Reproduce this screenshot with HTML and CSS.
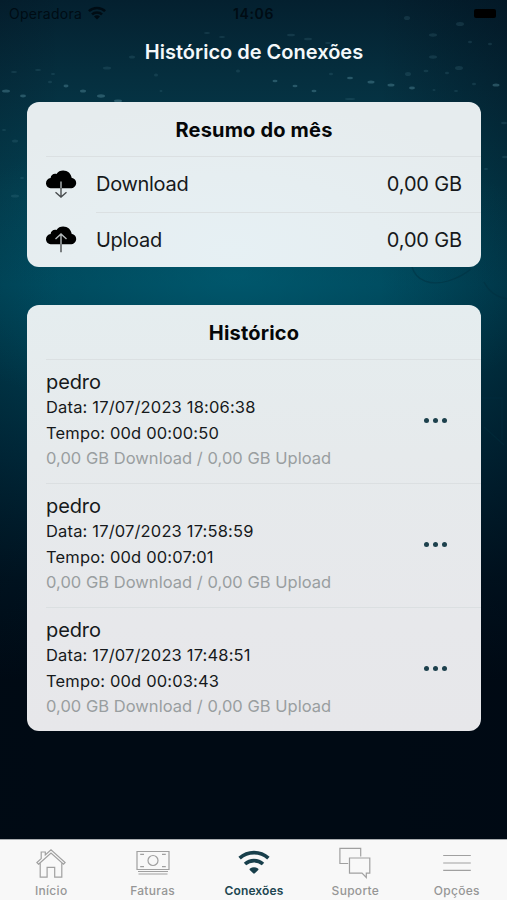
FILE: index.html
```html
<!DOCTYPE html>
<html lang="pt-BR">
<head>
<meta charset="utf-8">
<title>Histórico de Conexões</title>
<link rel="stylesheet" href="styles.css">
</head>
<body>
<div class="app">
  <svg class="sky" viewBox="0 0 507 840" aria-hidden="true">
    <g fill="#5d95a5">
      <g opacity=".4">
        <ellipse cx="6" cy="91" rx="4" ry="1.6"/><ellipse cx="23" cy="96" rx="3" ry="1.4"/><ellipse cx="66" cy="86" rx="2.5" ry="1.4"/><ellipse cx="83" cy="91" rx="3" ry="1.5"/><ellipse cx="101" cy="96" rx="4" ry="1.7"/><ellipse cx="118" cy="101" rx="4" ry="1.4"/>
        <ellipse cx="275" cy="81" rx="2.5" ry="1.3"/><ellipse cx="295" cy="86" rx="2.5" ry="1.3"/><ellipse cx="314" cy="91" rx="2.5" ry="1.3"/><ellipse cx="350" cy="78" rx="3" ry="1.3"/><ellipse cx="371" cy="82" rx="3.5" ry="1.5"/><ellipse cx="391" cy="85" rx="3.5" ry="1.5"/><ellipse cx="412" cy="88" rx="3" ry="1.4"/><ellipse cx="496" cy="85" rx="3.5" ry="1.6"/>
      </g>
      <g opacity=".17">
        <ellipse cx="107" cy="68" rx="4" ry="1.5"/><ellipse cx="132" cy="57" rx="3" ry="1.5"/><ellipse cx="50" cy="82" rx="2" ry="1.2"/><ellipse cx="53" cy="74" rx="2" ry="1"/><ellipse cx="38" cy="70" rx="3" ry="1"/><ellipse cx="14" cy="72" rx="3" ry="1"/><ellipse cx="156" cy="75" rx="2" ry="1.5"/><ellipse cx="161" cy="91" rx="1.5" ry="1"/><ellipse cx="238" cy="71" rx="2" ry="1.5"/><ellipse cx="207" cy="33" rx="3" ry="1"/><ellipse cx="222" cy="37" rx="3" ry="1"/>
        <ellipse cx="291" cy="35" rx="4" ry="1.3"/><ellipse cx="308" cy="39" rx="4" ry="1.3"/><ellipse cx="328" cy="43" rx="3" ry="1"/><ellipse cx="331" cy="74" rx="2" ry="1.3"/><ellipse cx="407" cy="18" rx="3" ry="2"/><ellipse cx="433" cy="35" rx="4" ry="1.7"/><ellipse cx="460" cy="24" rx="4" ry="2"/><ellipse cx="433" cy="57" rx="4" ry="1.7"/><ellipse cx="459" cy="68" rx="4" ry="2"/><ellipse cx="408" cy="74" rx="3" ry="2"/><ellipse cx="426" cy="71" rx="2.5" ry="1.3"/><ellipse cx="490" cy="44" rx="2" ry="1.3"/><ellipse cx="470" cy="42" rx="2" ry="1.3"/><ellipse cx="474" cy="84" rx="2" ry="1.3"/><ellipse cx="447" cy="73" rx="2" ry="1.3"/><ellipse cx="434" cy="90" rx="1.5" ry="1"/><ellipse cx="456" cy="91" rx="2" ry="1"/><ellipse cx="350" cy="99" rx="5" ry="1"/>
        <ellipse cx="15" cy="141" rx="3" ry="1.5"/><ellipse cx="4" cy="130" rx="2" ry="1"/><ellipse cx="22" cy="178" rx="2" ry="1"/><ellipse cx="15" cy="196" rx="4" ry="1.5"/><ellipse cx="504" cy="123" rx="3" ry="1.3"/><ellipse cx="505" cy="157" rx="3" ry="1.3"/><ellipse cx="486" cy="169" rx="2" ry="1"/>
      </g>
    </g>
    <g fill="none" stroke="#022e3e" stroke-width="1.3" opacity=".45">
      <path d="M412 267c4 14 19 19 36 14 10-3 17-7 23-12M484 282c5 10 12 15 23 17M482 398h20v42M484 427l20 18"/>
    </g>
  </svg>

  <header class="status">
    <div class="carrier">
      <span>Operadora</span>
      <svg width="18" height="14" viewBox="0 0 18 14"><g fill="none" stroke="currentColor" stroke-width="2.5"><path d="M.9 5.2a11.6 11.6 0 0 1 16.2 0M4 8.4a7.2 7.2 0 0 1 10 0"/></g><path d="M6 10.4a4.2 4.2 0 0 1 6 0l-3 3z" fill="currentColor"/></svg>
    </div>
    <span class="clock">14:06</span>
    <span class="battery"></span>
  </header>
  <h1 class="title">Histórico de Conexões</h1>

  <main>
    <section class="card summary">
      <h2>Resumo do mês</h2>
      <div class="usage">
        <svg class="cloud" width="32" height="32" viewBox="0 0 32 32"><path class="cloud-fill" d="M7 22.3C3.4 22.3 1 20.2 1 17.2c0-2.7 2-4.8 4.6-5.1C5.8 9 8.7 7 11.5 8c1.5-2.5 3.8-3.6 6.6-3.6 4.7 0 8.1 3.1 8.5 7.4 2.7.5 4.6 2.6 4.6 5.2 0 3-2.4 5.3-6 5.3z"/><path class="shaft" d="M16 15.5v6.8"/><path class="arrow" d="M16 22v9M10.5 26.2l5.5 4.9 5.5-4.9"/></svg>
        <div class="usage-line"><span class="name">Download</span><span class="value">0,00 GB</span></div>
      </div>
      <div class="usage">
        <svg class="cloud" width="32" height="32" viewBox="0 0 32 32"><path class="cloud-fill" d="M7 22.3C3.4 22.3 1 20.2 1 17.2c0-2.7 2-4.8 4.6-5.1C5.8 9 8.7 7 11.5 8c1.5-2.5 3.8-3.6 6.6-3.6 4.7 0 8.1 3.1 8.5 7.4 2.7.5 4.6 2.6 4.6 5.2 0 3-2.4 5.3-6 5.3z"/><path class="shaft" d="M16 12v10.3M10.5 16.9l5.5-4.9 5.5 4.9"/><path class="arrow" d="M16 22.3v8"/></svg>
        <div class="usage-line"><span class="name">Upload</span><span class="value">0,00 GB</span></div>
      </div>
    </section>

    <section class="card history">
      <h2>Histórico</h2>
      <article class="session">
        <div class="details"><h3>pedro</h3><p>Data: 17/07/2023 18:06:38</p><p>Tempo: 00d 00:00:50</p><p class="traffic">0,00 GB Download / 0,00 GB Upload</p></div>
        <div class="more"><i></i><i></i><i></i></div>
      </article>
      <article class="session">
        <div class="details"><h3>pedro</h3><p>Data: 17/07/2023 17:58:59</p><p>Tempo: 00d 00:07:01</p><p class="traffic">0,00 GB Download / 0,00 GB Upload</p></div>
        <div class="more"><i></i><i></i><i></i></div>
      </article>
      <article class="session">
        <div class="details"><h3>pedro</h3><p>Data: 17/07/2023 17:48:51</p><p>Tempo: 00d 00:03:43</p><p class="traffic">0,00 GB Download / 0,00 GB Upload</p></div>
        <div class="more"><i></i><i></i><i></i></div>
      </article>
    </section>
  </main>

  <nav class="tabs">
    <div class="tab"><svg width="34" height="34" viewBox="0 0 34 34"><path d="M4.5 18.2 17 7l12.5 11.2 1.6-1.7L17 3.8l-5.7 5.1V6H7.2v6.6l-4.3 3.9zM6.2 17.2v13.9h6.9v-9.8h7.6v9.8h7.1V17.2"/></svg><span>Início</span></div>
    <div class="tab"><svg width="34" height="34" viewBox="0 0 34 34"><path d="M1 5.5h32v18H1zM4.2 8.3H8M26 8.3h3.8M4.2 20.7H8M26 20.7h3.8M2 25.5h30M2.5 28h29"/><circle cx="17" cy="14.5" r="5"/></svg><span>Faturas</span></div>
    <div class="tab active"><svg width="34" height="34" viewBox="0 0 34 34"><path class="wave" d="M2.6 12.2a21.5 21.5 0 0 1 28.8 0M8 18a13.6 13.6 0 0 1 18 0"/><path class="dot" d="M13 22.4q4-2.2 8 0 1 .9 0 1.9l-3.2 3q-.8.7-1.6 0l-3.2-3q-1-1 0-1.9z"/></svg><span>Conexões</span></div>
    <div class="tab"><svg width="34" height="34" viewBox="0 0 34 34"><path d="M10.2 17.5H1.9V2.4h20.8v8.2M11.5 12h20.3v15.2h-3.5v4.3L24 27.2H11.5z"/></svg><span>Suporte</span></div>
    <div class="tab"><svg width="34" height="34" viewBox="0 0 34 34"><path d="M3.2 9.5h27.6M3.2 17h27.6M3.2 24.3h27.6"/></svg><span>Opções</span></div>
  </nav>
</div>
</body>
</html>
```

FILE: styles.css
```css
* { box-sizing: border-box; }
body { margin: 0; font-family: Inter, "Liberation Sans", sans-serif; }
h1, h2, h3, p { margin: 0; }

.app {
  position: relative;
  display: flex;
  flex-direction: column;
  height: 900px;
  overflow: hidden;
  background:
    radial-gradient(ellipse 330px 150px at 235px 275px, rgba(0, 102, 124, .5), rgba(0, 90, 110, .25) 50%, transparent),
    linear-gradient(90deg, rgba(0, 8, 20, .12), transparent 12%, transparent 75%, rgba(0, 8, 20, .32)),
    linear-gradient(#04202f, #052f3f 80px, #034152 190px, #00485c 285px, #003c4e 350px, #002839 460px, #001320 580px, #000a14 680px, #000a14 840px);
}
.sky { position: absolute; inset: 0; width: 507px; height: 840px; }

.status {
  position: relative;
  display: grid;
  grid-template-columns: 1fr auto 1fr;
  align-items: center;
  height: 27px;
  padding: 0 11px 0 9px;
  color: #000c14;
  font-size: 14px;
}
.carrier { display: flex; align-items: center; gap: 6px; letter-spacing: .28px; }
.carrier svg { margin-bottom: 2px; }
.clock { padding-left: 2px; font-weight: 600; letter-spacing: .6px; }
.battery { justify-self: end; width: 22px; height: 9px; border-radius: 2px; background: #000; }

.title {
  position: relative;
  height: 75px;
  padding-left: 1px;
  color: #f4f8fa;
  font-size: 20px;
  font-weight: 600;
  line-height: 50px;
  text-align: center;
}
main { position: relative; flex: 1; padding: 0 26px 0 27px; }

.card { overflow: hidden; border-radius: 12px; }
.card h2 {
  height: 55px;
  margin-left: 19px;
  padding-right: 19px;
  border-bottom: 1px solid #dbe0e2;
  color: #050708;
  font-size: 20px;
  font-weight: 700;
  letter-spacing: .18px;
  line-height: 56px;
  text-align: center;
}
.summary {
  height: 165px;
  background: radial-gradient(ellipse 300px 150px at 45% 90%, #e6f0f4, #e6ecee);
}
.usage { display: flex; height: 55px; padding-left: 18px; }
.cloud { margin-top: 9px; flex: none; }
.usage + .usage .cloud { margin-top: 10px; }
.cloud-fill { fill: #000; }
.shaft, .arrow { fill: none; stroke-width: 1.4; }
.shaft { stroke: #b4babc; }
.arrow { stroke: #4a4e50; }
.usage-line {
  display: flex;
  justify-content: space-between;
  flex: 1;
  margin-left: 19px;
  padding-right: 19px;
  color: #16191b;
  font-size: 20px;
  letter-spacing: -.3px;
  line-height: 55px;
}
.value { letter-spacing: -.15px; }
.usage + .usage .usage-line { border-top: 1px solid #dbe0e2; line-height: 54px; }

.history {
  height: 426px;
  margin-top: 38px;
  background: linear-gradient(#e5edef, #e6eaec 35%, #e7e8eb 75%, #e7e7ea);
}
.session {
  display: flex;
  align-items: flex-start;
  justify-content: space-between;
  height: 124px;
  margin-left: 19px;
  padding: 9px 34px 0 0;
}
.session:nth-of-type(1) { height: 123px; }
.session + .session { border-top: 1px solid #dbdfe1; }
.details { color: #16191b; font-size: 16.5px; letter-spacing: .16px; line-height: 25.7px; }
.details h3 { font-size: 20px; font-weight: 400; letter-spacing: -.1px; line-height: 26px; }
.details .traffic { color: #999ea0; letter-spacing: .03px; }
.more { display: flex; gap: 4px; margin-top: 49px; }
.more i { width: 5px; height: 5px; border-radius: 50%; background: #1d414d; }

.tabs {
  position: relative;
  display: grid;
  grid-template-columns: repeat(5, 1fr);
  height: 61px;
  border-top: 1px solid #a9adb0;
  background: #f8f8f8;
}
.tab {
  display: flex;
  flex-direction: column;
  align-items: center;
  padding-top: 6px;
  padding-left: 1px;
  color: #969696;
  font-size: 12px;
  font-weight: 500;
  letter-spacing: .3px;
  line-height: 22px;
}
.tab svg { fill: none; stroke: #a0a0a0; stroke-width: 1.2; }
.tab.active { color: #214650; font-weight: 600; letter-spacing: .15px; }
.tab.active .wave { stroke: #183f4b; stroke-width: 3.6; }
.tab.active .dot { fill: #183f4b; stroke: none; }
```
